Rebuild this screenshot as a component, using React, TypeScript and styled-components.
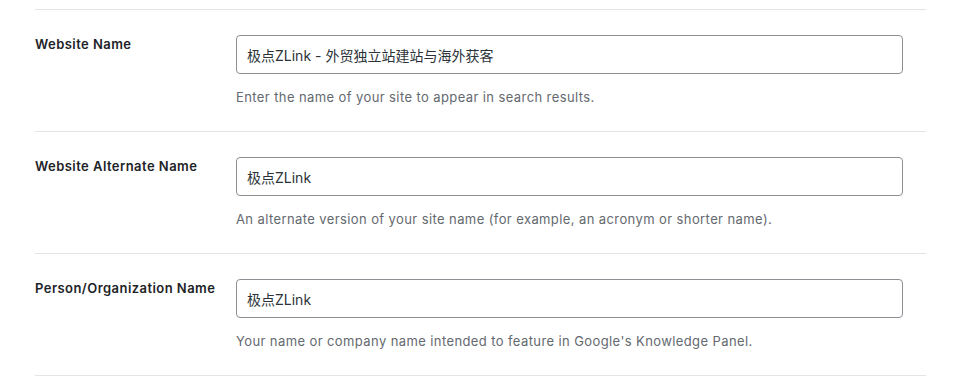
import styled, { createGlobalStyle } from "styled-components";

const fields = [
  {
    label: "Website Name",
    value: "极点ZLink - 外贸独立站建站与海外获客",
    help: "Enter the name of your site to appear in search results.",
  },
  {
    label: "Website Alternate Name",
    value: "极点ZLink",
    help: "An alternate version of your site name (for example, an acronym or shorter name).",
  },
  {
    label: "Person/Organization Name",
    value: "极点ZLink",
    help: "Your name or company name intended to feature in Google's Knowledge Panel.",
  },
];

const GlobalStyle = createGlobalStyle`
  body {
    margin: 0;
    background: #fff;
    font-family: Inter, "Noto Sans", "Noto Sans CJK SC", sans-serif;
  }
`;

const Page = styled.div`
  width: 956px;
  height: 392px;
  padding: 9px 30px 0 35px;
  box-sizing: border-box;
  overflow: hidden;
`;

const Table = styled.div`
  width: 891px;
  border-top: 1px solid #e2e4e7;
`;

const Row = styled.div`
  display: grid;
  grid-template-columns: 201px 667px;
  height: 122px;
  box-sizing: border-box;
  padding-top: 25px;
  border-bottom: 1px solid #e2e4e7;
`;

const Label = styled.label`
  font-size: 13px;
  font-weight: 600;
  color: #1d2327;
  line-height: 18px;
  letter-spacing: 0.45px;
`;

const Field = styled.div`
  display: flex;
  flex-direction: column;
`;

const Input = styled.input`
  height: 39px;
  box-sizing: border-box;
  border: 1px solid #8c8f94;
  border-radius: 4px;
  padding: 0 10px;
  font-family: Inter, "Noto Sans CJK SC", sans-serif;
  font-size: 14px;
  color: #2c3338;
  background: #fff;
  outline: none;
`;

const Help = styled.p`
  margin: 14px 0 0;
  font-size: 13px;
  line-height: 18px;
  color: #646970;
  letter-spacing: 0.4px;
`;

export default function App() {
  return (
    <>
      <GlobalStyle />
      <Page>
        <Table>
          {fields.map((f) => (
            <Row key={f.label}>
              <Label>{f.label}</Label>
              <Field>
                <Input defaultValue={f.value} />
                <Help>{f.help}</Help>
              </Field>
            </Row>
          ))}
        </Table>
      </Page>
    </>
  );
}
